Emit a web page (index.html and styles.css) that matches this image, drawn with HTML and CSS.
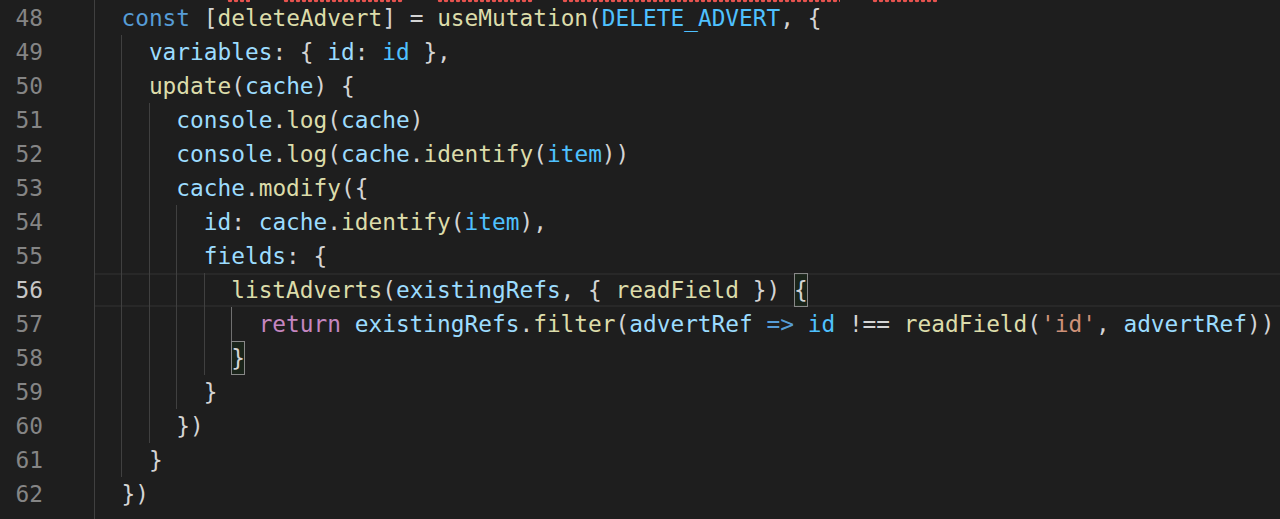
FILE: index.html
```html
<!DOCTYPE html>
<html lang="en">
<head>
    <meta charset="UTF-8">
    <meta name="viewport" content="width=device-width, initial-scale=1.0">
    <title>Editor - useMutation</title>
    <link rel="stylesheet" href="styles.css">
</head>
<body>
<div class="editor">
    <!-- error squiggles left over from line 47 -->
    <div class="squiggles">
        <span class="sq sq1"></span>
        <span class="sq sq2"></span>
        <span class="sq sq3"></span>
        <span class="sq sq4"></span>
        <span class="sq sq5"></span>
    </div>

    <div class="line"><span class="ln">48</span><span class="code"><i class="g"></i><span class="k">const</span> [<span class="f">deleteAdvert</span>] = <span class="f">useMutation</span>(<span class="c">DELETE_ADVERT</span>, {</span></div>
    <div class="line"><span class="ln">49</span><span class="code"><i class="g"></i><i class="g"></i><span class="v">variables</span>: { <span class="v">id</span>: <span class="c">id</span> },</span></div>
    <div class="line"><span class="ln">50</span><span class="code"><i class="g"></i><i class="g"></i><span class="f">update</span>(<span class="v">cache</span>) {</span></div>
    <div class="line"><span class="ln">51</span><span class="code"><i class="g"></i><i class="g"></i><i class="g"></i><span class="v">console</span>.<span class="f">log</span>(<span class="v">cache</span>)</span></div>
    <div class="line"><span class="ln">52</span><span class="code"><i class="g"></i><i class="g"></i><i class="g"></i><span class="v">console</span>.<span class="f">log</span>(<span class="v">cache</span>.<span class="f">identify</span>(<span class="c">item</span>))</span></div>
    <div class="line"><span class="ln">53</span><span class="code"><i class="g"></i><i class="g"></i><i class="g"></i><span class="v">cache</span>.<span class="f">modify</span>({</span></div>
    <div class="line"><span class="ln">54</span><span class="code"><i class="g"></i><i class="g"></i><i class="g"></i><i class="g"></i><span class="v">id</span>: <span class="v">cache</span>.<span class="f">identify</span>(<span class="c">item</span>),</span></div>
    <div class="line"><span class="ln">55</span><span class="code"><i class="g"></i><i class="g"></i><i class="g"></i><i class="g"></i><span class="v">fields</span>: {</span></div>
    <div class="line current"><span class="ln">56</span><span class="code"><i class="g"></i><i class="g"></i><i class="g"></i><i class="g"></i><i class="g"></i><span class="f">listAdverts</span>(<span class="v">existingRefs</span>, { <span class="f">readField</span> }) <span class="match">{</span></span></div>
    <div class="line"><span class="ln">57</span><span class="code"><i class="g"></i><i class="g"></i><i class="g"></i><i class="g"></i><i class="g"></i><i class="g active"></i><span class="r">return</span> <span class="v">existingRefs</span>.<span class="f">filter</span>(<span class="v">advertRef</span> <span class="k">=&gt;</span> <span class="c">id</span> !== <span class="f">readField</span>(<span class="s">'id'</span>, <span class="v">advertRef</span>))</span></div>
    <div class="line"><span class="ln">58</span><span class="code"><i class="g"></i><i class="g"></i><i class="g"></i><i class="g"></i><i class="g"></i><span class="match">}</span></span></div>
    <div class="line"><span class="ln">59</span><span class="code"><i class="g"></i><i class="g"></i><i class="g"></i><i class="g"></i>}</span></div>
    <div class="line"><span class="ln">60</span><span class="code"><i class="g"></i><i class="g"></i><i class="g"></i>})</span></div>
    <div class="line"><span class="ln">61</span><span class="code"><i class="g"></i><i class="g"></i>}</span></div>
    <div class="line"><span class="ln">62</span><span class="code"><i class="g"></i>})</span></div>
    <div class="line"><span class="ln"></span><span class="code"><i class="g"></i></span></div>
</div>
</body>
</html>
```

FILE: styles.css
```css
body {
    margin: 0;
    overflow: hidden;
    background: #1e1e1e;
    color: #d4d4d4;
    font-family: "DejaVu Sans Mono", Menlo, monospace;
    font-size: 22.8px;
}

.editor {
    height: 519px;
    overflow: hidden;
}

/* squiggles from the line above, only the bottom edge shows */
.squiggles {
    display: flex;
    height: 1px;
    margin-left: 94px;
    border-left: 1px solid #404040;
}
.sq {
    height: 3px;
    flex: none;
    background-image: radial-gradient(circle at 3px 0, #e8534f 2px, transparent 2.6px);
    background-size: 6px 3px;
    background-repeat: repeat-x;
}
.sq1 { margin-left: 132px; width: 23px; }
.sq2 { margin-left: 33px; width: 120px; }
.sq3 { margin-left: 34px; width: 96px; }
.sq4 { margin-left: 29px; width: 278px; }
.sq5 { margin-left: 32px; width: 65px; }

.line {
    display: flex;
    height: 34px;
    line-height: 34px;
}

.ln {
    flex: none;
    width: 43px;
    margin-right: 51px;
    text-align: right;
    color: #858585;
}

.code {
    flex: 1;
    white-space: pre;
}

.current .ln {
    color: #c6c6c6;
}
.current .code {
    box-shadow: inset 0 2px #282828, inset 0 -2px #282828;
}

/* indent guides, one per 2 spaces */
.g {
    display: inline-block;
    width: 2ch;
    height: 34px;
    vertical-align: top;
    box-sizing: border-box;
    border-left: 1px solid #404040;
}
.g.active {
    border-left-color: #707070;
}

.match {
    display: inline-block;
    height: 34px;
    vertical-align: top;
    box-shadow: inset 0 0 0 1px #888888;
    background: rgba(0, 100, 0, 0.1);
}

.k { color: #569cd6; }
.f { color: #dcdcaa; }
.v { color: #9cdcfe; }
.c { color: #4fc1ff; }
.s { color: #ce9178; }
.r { color: #c586c0; }
```
